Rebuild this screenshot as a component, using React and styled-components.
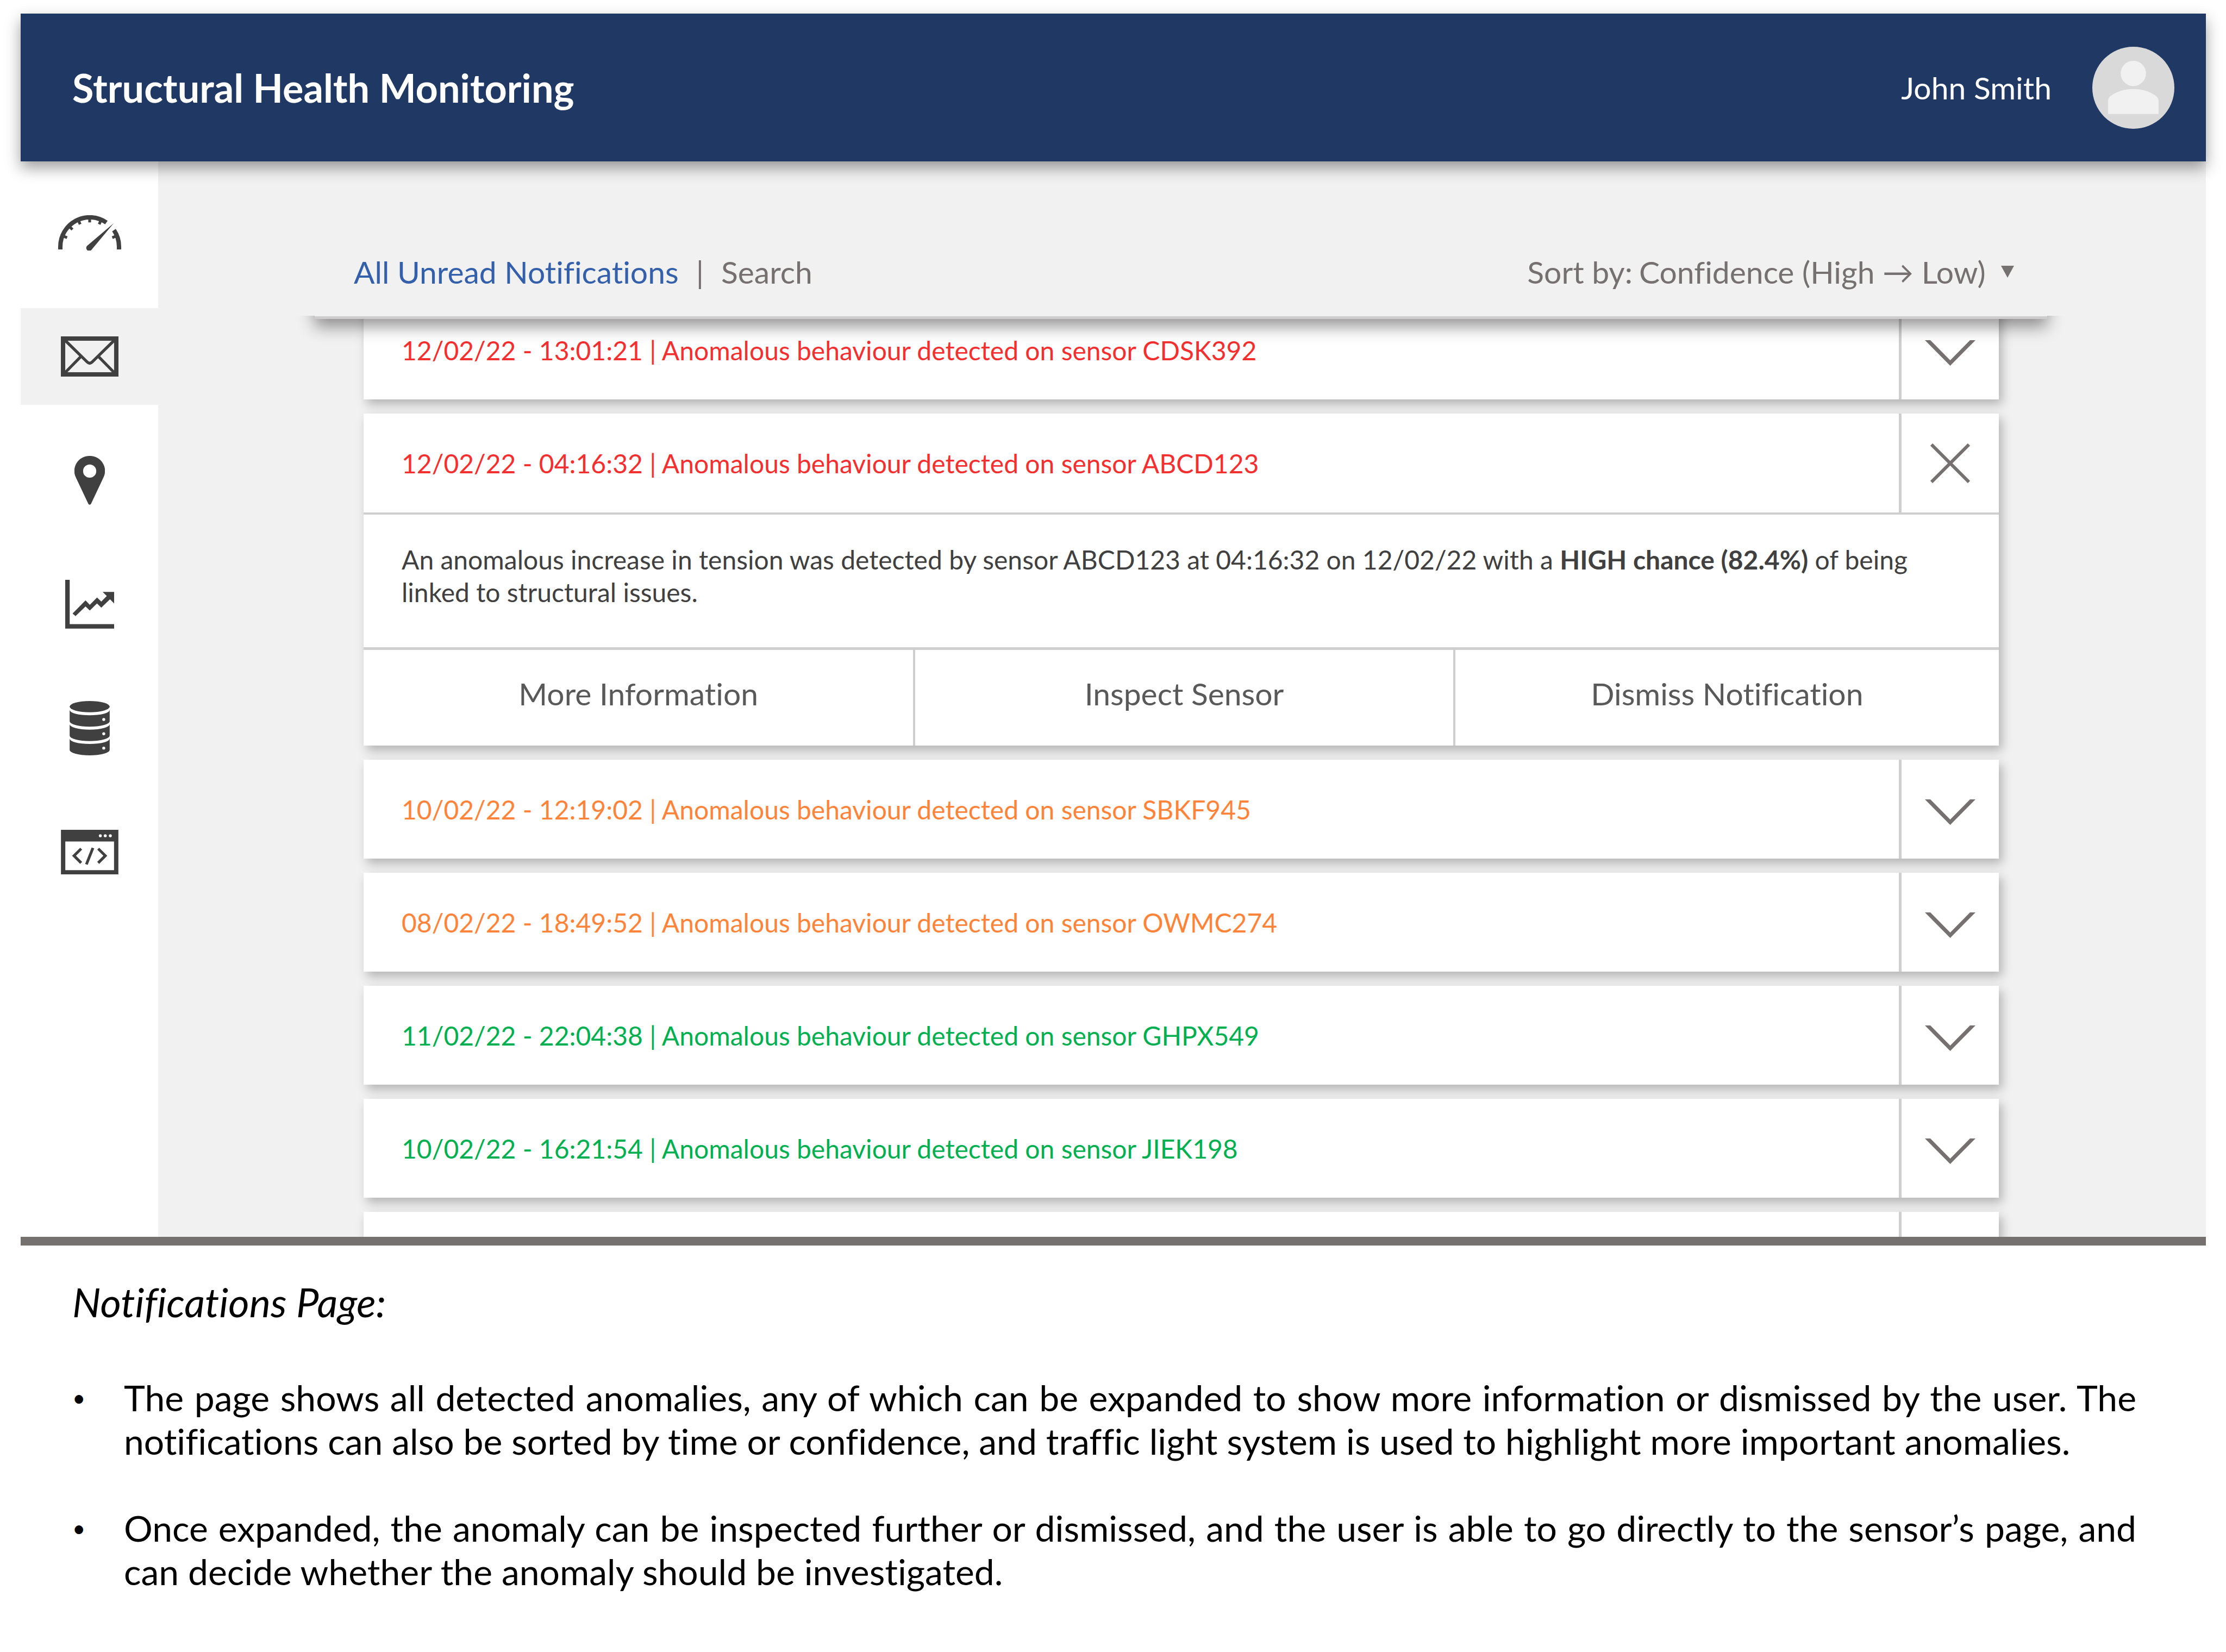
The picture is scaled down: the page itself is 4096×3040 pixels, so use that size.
import React, { useState } from 'react';
import styled, { createGlobalStyle } from 'styled-components';

const color = {
  navy: '#203864',
  panel: '#f1f1f1',
  icon: '#404040',
  grey: '#767171',
  rule: '#cfcfcf',
  link: '#3460ab',
  high: '#f32f2f',
  medium: '#ff843a',
  low: '#00b050',
};

const GlobalStyle = createGlobalStyle`
  *, *::before, *::after { box-sizing: border-box; }
  body {
    margin: 0;
    background: #fff;
    font-family: Lato, "Noto Sans", sans-serif;
    font-variant-ligatures: none;
  }
  button, select {
    margin: 0;
    padding: 0;
    border: 0;
    background: none;
    color: inherit;
    font: inherit;
    font-variant-ligatures: none;
    cursor: pointer;
  }
  a { color: inherit; text-decoration: none; }
  h1, h2, p, ul { margin: 0; padding: 0; }
  ul { list-style: none; }
`;

const Page = styled.div`
  display: flex;
  flex-direction: column;
  height: 100vh;
  padding: 25px 37px 0 38px;
`;

const Header = styled.header`
  position: relative;
  z-index: 2;
  display: flex;
  align-items: center;
  justify-content: space-between;
  height: 272px;
  flex: none;
  padding: 0 58px 0 95px;
  background: ${color.navy};
  color: #fff;
  box-shadow: 0 12px 26px rgba(0, 0, 0, 0.38);
`;

const Title = styled.h1`
  font-size: 72px;
  font-weight: 700;
`;

const Account = styled.button`
  display: flex;
  align-items: center;
  gap: 75px;
  font-size: 57px;
`;

const Body = styled.div`
  display: flex;
  flex: 1;
  min-height: 0;
`;

const Sidebar = styled.nav`
  display: flex;
  flex-direction: column;
  gap: 50px;
  width: 253px;
  flex: none;
  padding-top: 42px;
`;

const NavLink = styled.a`
  display: flex;
  align-items: center;
  justify-content: center;
  height: 178px;
  color: ${color.icon};
  background: ${(p) => (p.$active ? color.panel : 'transparent')};
`;

const Main = styled.main`
  display: flex;
  flex-direction: column;
  flex: 1;
  min-width: 0;
  overflow: hidden;
  background: ${color.panel};
`;

const Toolbar = styled.div`
  position: relative;
  z-index: 1;
  display: flex;
  align-items: center;
  justify-content: space-between;
  height: 165px;
  flex: none;
  margin: 125px 292px 0 288px;
  padding: 0 61px 4px 72px;
  border-bottom: 5px solid #cecccc;
  background: ${color.panel};
  color: ${color.grey};
  font-size: 57px;

  &::after {
    content: '';
    position: absolute;
    inset: 0 0 -5px;
    box-shadow: 0 14px 28px rgba(0, 0, 0, 0.42);
    clip-path: inset(calc(100% - 6px) -60px -60px);
    pointer-events: none;
  }
`;

const Tabs = styled.div`
  display: flex;
  gap: 32px;
`;

const Tab = styled.button`
  color: ${(p) => (p.$active ? color.link : 'inherit')};
`;

const Sort = styled.label`
  display: flex;
  align-items: center;
  gap: 12px;
`;

const SortSelect = styled.select`
  appearance: none;
  outline: none;
`;

const SortArrow = styled.svg`
  width: 24px;
  height: 22px;
  margin-left: 16px;
`;

const ListArea = styled.div`
  flex: 1;
  min-height: 0;
  padding: 0 381px 0 378px;
  overflow: hidden;
`;

const List = styled.ul`
  display: flex;
  flex-direction: column;
  gap: 26px;
  margin-top: -34px;
`;

const Card = styled.li`
  background: #fff;
  box-shadow: 6px 9px 18px rgba(0, 0, 0, 0.26);
`;

const CardHead = styled.div`
  display: flex;
  align-items: center;
  justify-content: space-between;
  height: 182px;
  padding-left: 70px;
  color: ${(p) => color[p.$level]};
  font-size: 48px;
`;

const Toggle = styled.button`
  display: flex;
  align-items: center;
  justify-content: center;
  align-self: stretch;
  width: 184px;
  border-left: 5px solid ${color.rule};
  color: ${color.grey};
`;

const Details = styled.p`
  padding: 53px 70px 71px;
  border-top: 4px solid ${color.rule};
  color: ${color.icon};
  font-size: 48px;
  line-height: 60px;
`;

const Actions = styled.div`
  display: grid;
  grid-template-columns: 1011fr 993fr 1004fr;
  border-top: 5px solid ${color.rule};
`;

const Action = styled.button`
  height: 176px;
  padding-bottom: 16px;
  color: #595959;
  font-size: 57px;

  & + & { border-left: 4px solid ${color.rule}; }
`;

const Notes = styled.section`
  flex: none;
  padding: 59px 128px 108px 95px;
  border-top: 16px solid ${color.grey};
  color: #000;
`;

const NotesTitle = styled.h2`
  font-size: 74px;
  font-style: italic;
  font-weight: 400;
  line-height: 90px;
`;

const NotesList = styled.ul`
  display: flex;
  flex-direction: column;
  gap: 80px;
  margin-top: 91px;
`;

const Note = styled.li`
  display: grid;
  grid-template-columns: 95px 1fr;
  font-size: 66px;
  line-height: 80px;

  &::before {
    content: '•';
    font-size: 42px;
  }
`;

const NoteText = styled.p`
  text-align: justify;
`;

const GaugeIcon = () => (
  <svg width="116" height="65" viewBox="0 0 127 71" fill="none" stroke="currentColor" aria-hidden="true">
    <path strokeWidth="8.8" d="M4.4 69V63.5A59.1 59.1 0 0 1 97.2 14.7M112.4 30A59.1 59.1 0 0 1 122.6 63.5V69" />
    {[-68, -45, -23, 0, 23, 68].map((deg) => (
      <path key={deg} strokeWidth="5.6" d="M63.5 6V14.4" transform={`rotate(${deg} 63.5 63.5)`} />
    ))}
    <path fill="currentColor" stroke="none" d="M112 16L67.8 68.8A6 6 0 1 1 59.4 60.8Z" />
  </svg>
);

const MailIcon = () => (
  <svg width="106" height="74" viewBox="0 0 116 81" fill="none" stroke="currentColor" aria-hidden="true">
    <rect x="4.4" y="4.4" width="107.2" height="72.2" strokeWidth="8.8" />
    <path strokeWidth="5.8" d="M9 8.5L53 51.5Q58 56.5 63 51.5L107 8.5M40 41L9 72.5M76 41L107 72.5" />
  </svg>
);

const PinIcon = () => (
  <svg width="56" height="90" viewBox="0 0 61 99" fill="currentColor" fillRule="evenodd" aria-hidden="true">
    <path d="M30.5 0A30.3 30.3 0 0 1 58.5 43.5L33.2 97Q30.5 100.5 27.8 97L2.5 43.5A30.3 30.3 0 0 1 30.5 0ZM30.5 17.4A13.3 13.3 0 1 0 30.5 44.1A13.3 13.3 0 1 0 30.5 17.4Z" />
  </svg>
);

const ChartIcon = () => (
  <svg width="90" height="90" viewBox="0 0 98 98" fill="currentColor" aria-hidden="true">
    <path d="M0 0H9V88.7H98V97.6H0Z" />
    <path d="M14.7 67.4L40.7 41.2L49.3 50L63.7 35.4L72.3 43.6L83.3 32.5L75 24.2H98V47.5L89.7 38.8L72.3 55.7L63.7 47.5L49.3 61.6L40.7 53.3L20.7 72.7Z" />
  </svg>
);

const DatabaseIcon = () => (
  <svg width="74" height="100" viewBox="0 0 81 110" fill="currentColor" fillRule="evenodd" aria-hidden="true">
    <ellipse cx="40.5" cy="11.4" rx="40.5" ry="11.4" />
    {[0, 29, 58].map((y) => (
      <path
        key={y}
        transform={`translate(0 ${y})`}
        d="M0 18A40.5 11 0 0 0 81 18V41A40.5 11 0 0 1 0 41ZM69 34.3A3 3 0 1 0 69 40.3A3 3 0 1 0 69 34.3Z"
      />
    ))}
  </svg>
);

const CodeIcon = () => (
  <svg width="106" height="82" viewBox="0 0 116 90" fill="currentColor" fillRule="evenodd" aria-hidden="true">
    <path d="M0 0H116V90H0ZM8.8 23.5V81.4H107.2V23.5Z" />
    <g fill="#fff">
      <circle cx="79.5" cy="12" r="3" />
      <circle cx="89.5" cy="12" r="3" />
      <circle cx="99.7" cy="12" r="3" />
    </g>
    <path fill="none" stroke="currentColor" strokeWidth="5.6" d="M40.8 38.2L26.4 52.4L40.8 66.8M75.2 38.2L89.6 52.4L75.2 66.8M64.6 36.6L51.4 69.8" />
  </svg>
);

const Avatar = () => (
  <svg width="151" height="151" viewBox="0 0 166 166" aria-hidden="true">
    <circle cx="83" cy="83" r="83" fill="#d9d9d9" />
    <g fill="#f1f1f1">
      <circle cx="83" cy="54" r="25.6" />
      <path d="M32 136V110C32 105 34 102 38 99C50 90.5 66 85.5 83 85.5C100 85.5 116 90.5 128 99C132 102 134 105 134 110V136Z" />
    </g>
  </svg>
);

const ChevronIcon = () => (
  <svg width="93" height="58" viewBox="0 0 93 58" fill="currentColor" aria-hidden="true">
    <path d="M0 11H10L46.5 48L83 11H93L46.5 58Z" />
  </svg>
);

const CloseIcon = () => (
  <svg width="73" height="73" viewBox="0 0 73 73" stroke="currentColor" strokeWidth="6" aria-hidden="true">
    <path d="M2 2L71 71M71 2L2 71" />
  </svg>
);

const navItems = [
  { label: 'Dashboard', Icon: GaugeIcon },
  { label: 'Notifications', Icon: MailIcon, active: true },
  { label: 'Map', Icon: PinIcon },
  { label: 'Trends', Icon: ChartIcon },
  { label: 'Data', Icon: DatabaseIcon },
  { label: 'Developer', Icon: CodeIcon },
];

const notifications = [
  { date: '12/02/22', time: '13:01:21', sensor: 'CDSK392', level: 'high', chance: '91.7%' },
  { date: '12/02/22', time: '04:16:32', sensor: 'ABCD123', level: 'high', chance: '82.4%' },
  { date: '10/02/22', time: '12:19:02', sensor: 'SBKF945', level: 'medium', chance: '58.3%' },
  { date: '08/02/22', time: '18:49:52', sensor: 'OWMC274', level: 'medium', chance: '49.6%' },
  { date: '11/02/22', time: '22:04:38', sensor: 'GHPX549', level: 'low', chance: '21.5%' },
  { date: '10/02/22', time: '16:21:54', sensor: 'JIEK198', level: 'low', chance: '14.2%' },
  { level: 'low' },
];

function Notification({ item, open, onToggle }) {
  const { date, time, sensor, level, chance } = item;
  return (
    <Card>
      <CardHead $level={level}>
        <span>{sensor && `${date} - ${time} | Anomalous behaviour detected on sensor ${sensor}`}</span>
        <Toggle type="button" aria-expanded={open} aria-label={open ? 'Collapse' : 'Expand'} onClick={onToggle}>
          {open ? <CloseIcon /> : <ChevronIcon />}
        </Toggle>
      </CardHead>
      {open && (
        <>
          <Details>
            {`An anomalous increase in tension was detected by sensor ${sensor} at ${time} on ${date} with a `}
            <b>{`${level.toUpperCase()} chance (${chance})`}</b>
            {' of being linked to structural issues.'}
          </Details>
          <Actions>
            <Action type="button">More Information</Action>
            <Action type="button">Inspect Sensor</Action>
            <Action type="button">Dismiss Notification</Action>
          </Actions>
        </>
      )}
    </Card>
  );
}

export default function App() {
  const [openIndex, setOpenIndex] = useState(1);
  return (
    <>
      <GlobalStyle />
      <Page>
        <Header>
          <Title>Structural Health Monitoring</Title>
          <Account type="button">
            John Smith
            <Avatar />
          </Account>
        </Header>
        <Body>
          <Sidebar>
            {navItems.map(({ label, Icon, active }) => (
              <NavLink key={label} href="#" aria-label={label} $active={active}>
                <Icon />
              </NavLink>
            ))}
          </Sidebar>
          <Main>
            <Toolbar>
              <Tabs>
                <Tab type="button" $active>All Unread Notifications</Tab>
                <span>|</span>
                <Tab type="button">Search</Tab>
              </Tabs>
              <Sort>
                Sort by:
                <SortSelect defaultValue="confidence">
                  <option value="confidence">Confidence (High → Low)</option>
                </SortSelect>
                <SortArrow viewBox="0 0 24 22" aria-hidden="true">
                  <path d="M0 0H24L12 22Z" fill="currentColor" />
                </SortArrow>
              </Sort>
            </Toolbar>
            <ListArea>
              <List>
                {notifications.map((item, i) => (
                  <Notification
                    key={i}
                    item={item}
                    open={openIndex === i}
                    onToggle={() => setOpenIndex(openIndex === i ? -1 : i)}
                  />
                ))}
              </List>
            </ListArea>
          </Main>
        </Body>
        <Notes>
          <NotesTitle>Notifications Page:</NotesTitle>
          <NotesList>
            <Note>
              <NoteText>
                The page shows all detected anomalies, any of which can be expanded to show more information or
                dismissed by the user. The notifications can also be sorted by time or confidence, and traffic light
                system is used to highlight more important anomalies.
              </NoteText>
            </Note>
            <Note>
              <NoteText>
                Once expanded, the anomaly can be inspected further or dismissed, and the user is able to go directly
                to the sensor’s page, and can decide whether the anomaly should be investigated.
              </NoteText>
            </Note>
          </NotesList>
        </Notes>
      </Page>
    </>
  );
}
